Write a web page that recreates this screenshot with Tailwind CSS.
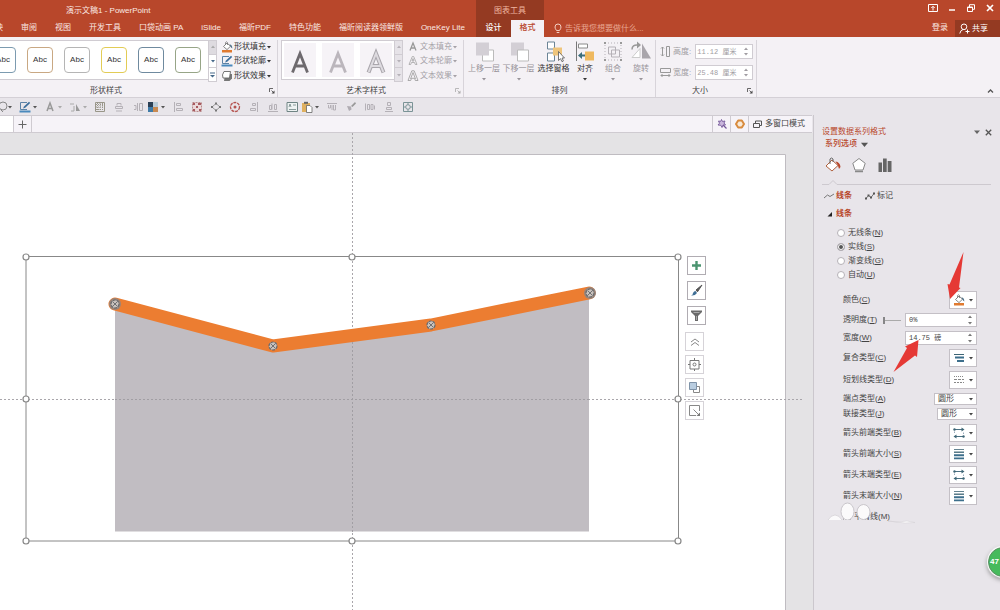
<!DOCTYPE html>
<html lang="zh-CN">
<head>
  <meta charset="UTF-8" />
  <meta name="viewport" content="width=device-width, initial-scale=1.0"/>
  <title>演示文稿1 - PowerPoint</title>
  <script src="https://cdn.jsdelivr.net/npm/@tailwindcss/browser@4"></script>
</head>
<body class="h-screen flex flex-col overflow-hidden bg-[#e8e5ea] text-[#444] text-[8px] leading-[12px] font-['Liberation_Sans','Noto_Sans_CJK_SC',sans-serif]">
  <!-- Shared icons -->
  <svg class="hidden">
    <symbol id="caret" viewBox="0 0 4 4"><path d="M0 1h4L2 3.4z" fill="currentColor"/></symbol>
    <symbol id="caret-up" viewBox="0 0 4 4"><path d="M0 3h4L2 .6z" fill="currentColor"/></symbol>
    <symbol id="launcher" viewBox="0 0 6 6"><path d="M.5 4V.5H4M2.5 2.5l2 2" fill="none" stroke="currentColor" stroke-width=".8"/><path d="M5.5 2.5v3h-3z" fill="currentColor"/></symbol>
    <symbol id="bucket" viewBox="0 0 12 12"><path d="M2.5 5.5 6 2l3.5 3.2L6 8.6z" fill="#fff" stroke="#777" stroke-width=".9"/><path d="M4.5 4V1.500Q5.500 0 6.500 1.500V4" fill="none" stroke="#777" stroke-width=".8"/><path d="M8.500 3.200q2.800.5 2.800 4.300-1.700-1-2.300-3z" fill="#4b6e86"/><path d="M1 9h10v2.500H1z" fill="#e07a30"/></symbol>
    <symbol id="outline" viewBox="0 0 12 12"><path d="M8 1.500H1.500v7H8" fill="none" stroke="#5c82a6"/><path d="m4 7.500 1-2L10 .8l1.200 1.200-5 4.800z" fill="#3c6e9c"/><path d="M.5 9.500h11v2H.5z" fill="#4a89bd"/></symbol>
    <symbol id="effect" viewBox="0 0 12 12"><path d="M4 4h7v4.500L8.500 11H3z" fill="#777"/><path d="M3 1.500h6.500L8.500 8H2q-1.500-3 1-6.500z" fill="#fff" stroke="#666" stroke-width=".9"/></symbol>
    <symbol id="lines" viewBox="0 0 12 12"><path d="M1 1.500h10" stroke="#3d6575" stroke-width=".8"/><path d="M1 4.200h10" stroke="#3d6575" stroke-width="1.300"/><path d="M1 7.200h10M1 10.400h10" stroke="#3d6f8c" stroke-width="1.900"/></symbol>
    <symbol id="arrows" viewBox="0 0 12 12"><path d="M1 2.500h9M2 9.500h9" stroke="#4b7183"/><path d="m8.500.5 3 2-3 2zM3.500 7.500l-3 2 3 2z" fill="#3d6575"/><circle cx="1.500" cy="2.500" r="1.200" fill="#3d6575"/><circle cx="10.500" cy="9.500" r="1.200" fill="#3d6575"/><path d="M1.500 4.500v1.500M10.500 5.500v1.500" stroke="#9ab"/></symbol>
  </svg>

  <!-- Title bar and tabs -->
  <header class="flex h-[37px] shrink-0 bg-[#b8472b] text-[#fbe9e3]">
    <div class="flex flex-col justify-between">
      <div class="pt-[5px] pl-[66px]">演示文稿1 - PowerPoint</div>
      <nav class="flex gap-[18px] h-[17px] pt-[2px] -ml-[5px] pr-[11px] whitespace-nowrap">
        <a href="#">映</a>
        <a href="#">审阅</a>
        <a href="#">视图</a>
        <a href="#">开发工具</a>
        <a href="#">口袋动画 PA</a>
        <a href="#">iSlide</a>
        <a href="#">福昕PDF</a>
        <a href="#">特色功能</a>
        <a href="#">福昕阅读器领鲜版</a>
        <a href="#">OneKey Lite</a>
      </nav>
    </div>
    <div class="flex flex-col justify-between w-[68px] bg-[#943a22]">
      <div class="pt-[5px] pl-[18px] text-[#eeb5a0]">图表工具</div>
      <div class="flex h-[17px] text-center leading-[16px]">
        <a href="#" class="flex-1 font-medium text-white">设计</a>
        <a href="#" class="w-[33px] bg-[#f4f1f5] font-medium text-[#b8472b]">格式</a>
      </div>
    </div>
    <div class="self-end flex items-center h-[17px] pl-[10px] gap-[3px] text-[#e9a893]">
      <svg class="w-2 h-[11px]" viewBox="0 0 8 11" fill="none" stroke="#f3cfc2"><path d="M2.500 7.500Q1 5.500 1 4a3 3 0 0 1 6 0q0 1.500-1.500 3.500zM2.700 9.500h2.600"/></svg>
      <span>告诉我您想要做什么...</span>
    </div>
    <div class="ml-auto flex flex-col justify-between">
      <div class="flex justify-end items-center gap-[9px] pt-[3px] pr-[5px]">
        <button aria-label="功能区显示选项"><svg class="w-[10px] h-[10px]" viewBox="0 0 10 10" fill="none" stroke="#fff"><path d="M.5 1.500h9v7h-9z"/><path d="M5 7.500v-4M3.300 5 5 3.300 6.700 5"/></svg></button>
        <button aria-label="最小化"><svg class="w-[10px] h-[10px]" viewBox="0 0 10 10"><path d="M2 7h6" stroke="#fff" stroke-width="1.500"/></svg></button>
        <button aria-label="还原"><svg class="w-[10px] h-[10px]" viewBox="0 0 10 10" fill="none" stroke="#fff"><path d="M1.500 4h5v4.500h-5zM3.500 4V1.700h5v4.600h-2M1.500 4.500h5"/></svg></button>
        <button aria-label="关闭"><svg class="w-[10px] h-[10px]" viewBox="0 0 10 10"><path d="m2 2 6 6M8 2 2 8" stroke="#fff" stroke-width="1.700"/></svg></button>
      </div>
      <div class="flex justify-end h-[17px]">
        <a href="#" class="pt-[2px] pr-[7px]">登录</a>
        <button class="flex items-center gap-[2px] w-[45px] pl-[4px] bg-[#943a22] text-white">
          <svg class="w-[11px] h-[11px]" viewBox="0 0 11 11" fill="none" stroke="#fff"><circle cx="5" cy="3.800" r="2.800"/><path d="M.8 10.500Q1.500 7 4 6.500M8.500 6.500v4M6.500 8.500h4"/></svg>
          共享
        </button>
      </div>
    </div>
  </header>

  <!-- Ribbon -->
  <div class="flex h-[61px] shrink-0 bg-[#f4f1f5] border-b border-[#d4d0d6] pt-[3px]">
    <!-- Shape styles -->
    <section class="flex flex-col justify-between border-r border-[#d8d4da]">
      <div class="flex">
        <div class="flex items-center gap-[11px] h-10 pr-[7px] bg-white border-y border-[#d0ccd2] text-[#333]">
          <button class="w-[26px] h-[26px] -ml-[10px] rounded-[4px] border border-[#7c9bb0] bg-white">Abc</button>
          <button class="w-[26px] h-[26px] rounded-[4px] border border-[#c9a883] bg-white">Abc</button>
          <button class="w-[26px] h-[26px] rounded-[4px] border border-[#b5b5b5] bg-white">Abc</button>
          <button class="w-[26px] h-[26px] rounded-[4px] border border-[#e2cc55] bg-white">Abc</button>
          <button class="w-[26px] h-[26px] rounded-[4px] border border-[#6f8a9f] bg-white">Abc</button>
          <button class="w-[26px] h-[26px] rounded-[4px] border border-[#97a587] bg-white">Abc</button>
        </div>
        <div class="flex flex-col w-[9px] border border-[#d0ccd2] bg-white text-[#46698a]">
          <button aria-label="上一行" class="flex-1 grid place-items-center bg-[#dedbe0] text-[#aaa]"><svg class="w-1 h-1"><use href="#caret-up"/></svg></button>
          <button aria-label="下一行" class="flex-1 grid place-items-center border-y border-[#d0ccd2]"><svg class="w-1 h-1"><use href="#caret"/></svg></button>
          <button aria-label="其他" class="flex-1 grid place-items-center"><svg class="w-[5px] h-[6px]" viewBox="0 0 5 6"><path d="M0 1h5" stroke="currentColor"/><path d="M0 3h5L2.500 5.500z" fill="currentColor"/></svg></button>
        </div>
        <div class="flex flex-col justify-between h-[42px] pl-[4px] pr-[6px] text-[#333]">
          <button class="flex items-center gap-[1px] h-[13px]"><svg class="w-3 h-3"><use href="#bucket"/></svg>形状填充<svg class="w-1 h-1"><use href="#caret"/></svg></button>
          <button class="flex items-center gap-[1px] h-[13px]"><svg class="w-3 h-3"><use href="#outline"/></svg>形状轮廓<svg class="w-1 h-1"><use href="#caret"/></svg></button>
          <button class="flex items-center gap-[1px] h-[13px]"><svg class="w-3 h-3"><use href="#effect"/></svg>形状效果<svg class="w-1 h-1"><use href="#caret"/></svg></button>
        </div>
      </div>
      <div class="flex items-center pr-[2px]"><span class="w-[212px] text-center">形状样式</span><button aria-label="形状样式设置" class="ml-auto"><svg class="w-[6px] h-[6px]"><use href="#launcher"/></svg></button></div>
    </section>

    <!-- WordArt styles -->
    <section class="flex flex-col justify-between border-r border-[#d8d4da]">
      <div class="flex pl-[3px]">
        <div class="flex items-center gap-[6px] h-10 px-[2px] bg-white border-y border-l border-[#d0ccd2]">
          <button aria-label="艺术字 1" class="w-[32px] h-[34px] bg-[#f6f3f7]"><svg class="w-full h-full" viewBox="0 0 32 34"><path d="M8.500 29.500 16 10.500l7.500 19M11 23h10" fill="none" stroke="#6e6a6e" stroke-width="2.800"/></svg></button>
          <button aria-label="艺术字 2" class="w-[32px] h-[34px] bg-[#f6f3f7]"><svg class="w-full h-full" viewBox="0 0 32 34"><path d="M8.500 29.500 16 10.500l7.500 19M11 23h10" fill="none" stroke="#bbb6bc" stroke-width="2.800"/></svg></button>
          <button aria-label="艺术字 3" class="w-[32px] h-[34px] bg-[#f6f3f7]"><svg class="w-full h-full" viewBox="0 0 32 34" fill="none"><path d="M8.500 29.500 16 10.500l7.500 19M11 23h10" stroke="#aaa6ac" stroke-width="4"/><path d="M8.700 29 16 10.500l7.300 18.500M11 23h10" stroke="#dedbe0" stroke-width="2"/></svg></button>
        </div>
        <div class="flex flex-col w-[9px] border border-[#d0ccd2] bg-[#e6e3e8] text-[#b5b1b7]">
          <button aria-label="上一行" class="flex-1 grid place-items-center"><svg class="w-1 h-1"><use href="#caret-up"/></svg></button>
          <button aria-label="下一行" class="flex-1 grid place-items-center border-y border-[#d0ccd2]"><svg class="w-1 h-1"><use href="#caret"/></svg></button>
          <button aria-label="其他" class="flex-1 grid place-items-center"><svg class="w-1 h-1"><use href="#caret"/></svg></button>
        </div>
        <div class="flex flex-col justify-between h-[42px] pl-[4px] pr-[6px] text-[#a5a1a7]">
          <button class="flex items-center gap-[1px] h-[13px]"><svg class="w-3 h-3" viewBox="0 0 12 12" fill="none" stroke="#999" stroke-width="1.300"><path d="M3 9.500 6 2l3 7.500M4 7h4"/></svg>文本填充<svg class="w-1 h-1"><use href="#caret"/></svg></button>
          <button class="flex items-center gap-[1px] h-[13px]"><svg class="w-3 h-3" viewBox="0 0 12 12" fill="none" stroke="#a5a5a5" stroke-width=".8"><path d="M2 9.500 5.300 1.500h1.400l3.300 8H8.300l-.8-2h-3l-.8 2zM5 6l1-2.500L7 6z"/></svg>文本轮廓<svg class="w-1 h-1"><use href="#caret"/></svg></button>
          <button class="flex items-center gap-[1px] h-[13px]"><svg class="w-3 h-3" viewBox="0 0 12 12" fill="none" stroke="#999" stroke-width=".8"><path d="M1 10.500 4.800.8h2.400l3.800 9.700H8.300l-.7-2.200H4.500l-.8 2.200zM3.500 9 6 2.500 8.500 9"/></svg>文本效果<svg class="w-1 h-1"><use href="#caret"/></svg></button>
        </div>
      </div>
      <div class="flex items-center pr-[2px]"><span class="w-[176px] text-center">艺术字样式</span><button aria-label="艺术字样式设置" class="ml-auto text-[#aaa]"><svg class="w-[6px] h-[6px]"><use href="#launcher"/></svg></button></div>
    </section>

    <!-- Arrange -->
    <section class="flex flex-col justify-between border-r border-[#d8d4da] text-center">
      <div class="flex pl-[3px] text-[#98949a]">
        <button class="flex flex-col items-center w-[34px]">
          <svg class="w-[22px] h-[23px]" viewBox="0 0 22 22"><path d="M9.500 9.500h11v11h-11z" fill="#fff" stroke="#bbb"/><path d="M3 2h13v13H3z" fill="#d3cfd5"/></svg>
          上移一层<svg class="w-1 h-1 mt-[2px]"><use href="#caret"/></svg>
        </button>
        <button class="flex flex-col items-center w-[35px]">
          <svg class="w-[22px] h-[23px]" viewBox="0 0 22 22"><path d="M3 2h13v13H3z" fill="#d3cfd5"/><path d="M9.500 9.500h11v11h-11z" fill="#fff" stroke="#bbb"/></svg>
          下移一层<svg class="w-1 h-1 mt-[2px]"><use href="#caret"/></svg>
        </button>
        <button class="flex flex-col items-center w-[35px] text-[#333]">
          <svg class="w-[22px] h-[23px]" viewBox="0 0 22 22"><path d="M4.500 1.500h7v7h-7zM4.500 12.500h7v8h-7z" fill="#fff" stroke="#6b8496"/><path d="M10 7h9v8h-9z" fill="#efc57c"/><path d="m15.500 11 0 9 2-1.800 1.500 3 1.400-.7-1.400-3h2.500z" fill="#fff" stroke="#555" stroke-width=".8"/></svg>
          选择窗格
        </button>
        <button class="flex flex-col items-center w-[28px] text-[#333]">
          <svg class="w-[22px] h-[23px]" viewBox="0 0 22 22"><path d="M2.500 1v19.500" stroke="#777"/><path d="M4.500 3.500h9v4h-9z" fill="#fff" stroke="#8a8a8a"/><path d="M11 11h9v9h-9z" fill="#efb95f"/><path d="m4 15 4-3.500V14h3v2H8v2.500z" fill="#3c6e7c"/></svg>
          对齐<svg class="w-1 h-1 mt-[2px]"><use href="#caret"/></svg>
        </button>
        <button class="flex flex-col items-center w-[28px]">
          <svg class="w-[22px] h-[23px]" viewBox="0 0 22 22" fill="none" stroke="#b5b1b7"><path d="M3 2.500h16v17H3z" stroke-dasharray="1 2"/><path d="M6.500 6.500h7v7h-7zM9.500 9.500h8v7h-8z"/><path d="M2 1.500h2v2H2zM18 1.500h2v2h-2zM2 18.500h2v2H2zM18 18.500h2v2h-2z" fill="#999" stroke="none"/></svg>
          组合<svg class="w-1 h-1 mt-[2px]"><use href="#caret"/></svg>
        </button>
        <button class="flex flex-col items-center w-[28px]">
          <svg class="w-[22px] h-[23px]" viewBox="0 0 22 22"><path d="M10 8v9H2z" fill="#fff" stroke="#ccc"/><path d="M12 3v15h9z" fill="#a9a5ab"/><path d="M2 9q0-5 6-4.500" fill="none" stroke="#999" stroke-width="1.500"/><path d="m7 1 4 3.500L7 8z" fill="#999"/></svg>
          旋转<svg class="w-1 h-1 mt-[2px]"><use href="#caret"/></svg>
        </button>
      </div>
      <div class="text-center">排列</div>
    </section>

    <!-- Size -->
    <section class="flex flex-col justify-between border-r border-[#d8d4da] pl-[4px] pr-[3px]">
      <div class="flex flex-col gap-[6px] pt-[4px] text-[#a09ca2]">
        <div class="flex items-center gap-[2px]">
          <svg class="w-[11px] h-[11px]" viewBox="0 0 11 11" fill="none" stroke="#999"><path d="M6.500.5h3v10h-3zM2.500 1v9M1 2.500 2.500 1 4 2.500M1 8.500 2.500 10 4 8.500"/></svg>
          <label for="h">高度:</label>
          <div class="flex h-[15px] ml-[2px] border border-[#d0ccd2] bg-white"><input id="h" value="11.12 厘米" class="w-[48px] pl-[1px] text-[7px] font-['Liberation_Mono','Noto_Sans_CJK_SC',monospace]"><span class="flex flex-col justify-evenly w-[8px]"><svg class="w-1 h-1"><use href="#caret-up"/></svg><svg class="w-1 h-1"><use href="#caret"/></svg></span></div>
        </div>
        <div class="flex items-center gap-[2px]">
          <svg class="w-[11px] h-[11px]" viewBox="0 0 11 11" fill="none" stroke="#999"><path d="M.5 1.500h10v4H.5zM1 8.500h9M2.500 7 1 8.500 2.500 10M8.500 7 10 8.500 8.500 10"/></svg>
          <label for="w">宽度:</label>
          <div class="flex h-[15px] ml-[2px] border border-[#d0ccd2] bg-white"><input id="w" value="25.48 厘米" class="w-[48px] pl-[1px] text-[7px] font-['Liberation_Mono','Noto_Sans_CJK_SC',monospace]"><span class="flex flex-col justify-evenly w-[8px]"><svg class="w-1 h-1"><use href="#caret-up"/></svg><svg class="w-1 h-1"><use href="#caret"/></svg></span></div>
        </div>
      </div>
      <div class="flex items-center"><span class="w-[80px] text-center">大小</span><button aria-label="大小设置" class="ml-auto"><svg class="w-[6px] h-[6px]"><use href="#launcher"/></svg></button></div>
    </section>
    <button aria-label="折叠功能区" class="ml-auto self-end p-[3px] pr-[6px]"><svg class="w-[7px] h-[6px]" viewBox="0 0 7 6"><path d="M1 4.500 3.500 2 6 4.500" fill="none" stroke="#555" stroke-width="1.300"/></svg></button>
  </div>

  <!-- Quick access toolbar -->
  <div class="flex items-center gap-[7px] h-[17px] shrink-0 text-[#555]">
    <button aria-label="形状" class="flex items-center -ml-1"><svg class="w-3 h-3" viewBox="0 0 12 12" fill="none" stroke="#888"><circle cx="7" cy="5" r="4"/><path d="m5 9 2 2"/></svg><svg class="w-1 h-1"><use href="#caret"/></svg></button>
    <button aria-label="轮廓" class="flex items-center gap-[2px]"><svg class="w-3 h-3"><use href="#outline"/></svg><svg class="w-1 h-1"><use href="#caret"/></svg></button>
    <button aria-label="字体颜色" class="flex items-center gap-[2px] text-[#aaa]"><svg class="w-3 h-3" viewBox="0 0 12 12" fill="none" stroke="#999" stroke-width="1.500"><path d="M3 10 6 2l3 8M4 7.500h4"/></svg><svg class="w-1 h-1"><use href="#caret"/></svg></button>
    <button aria-label="旋转" class="flex items-center gap-[2px] text-[#aaa]"><svg class="w-3 h-3" viewBox="0 0 12 12"><path d="M7 3v7h4z" fill="#999"/><path d="M5 5v5H2M1 3h4" fill="none" stroke="#aaa"/></svg><svg class="w-1 h-1"><use href="#caret"/></svg></button>
    <button aria-label="图案"><svg class="w-3 h-3" viewBox="0 0 12 12" fill="none" stroke="#999689"><path d="M1.500 1.500h9v9h-9z"/><path d="M2 3.500h8M2 6h8M2 8.500h8M3.500 2v8M6 2v8M8.500 2v8" stroke-dasharray="1 1"/></svg></button>
    <button aria-label="置于顶层"><svg class="w-3 h-3" viewBox="0 0 12 12" fill="none" stroke="#b5b1b7"><path d="M4 4.500V2.500h4v2M2.500 5.500h7v2h-7zM3 10h6"/></svg></button>
    <button aria-label="分布"><svg class="w-3 h-3" viewBox="0 0 12 12" fill="none" stroke="#b5b1b7"><path d="M7.500 2.500h3v7h-3zM2 4.500h2v4H2M5.500 2v8"/></svg></button>
    <button aria-label="主题色" class="flex items-center gap-[2px] -ml-1"><svg class="w-3 h-3" viewBox="0 0 12 12"><path d="M1 1h5v5H1z" fill="#2b4056"/><path d="M6 1h5v5H6z" fill="#b9cbd8"/><path d="M1 6h5v5H1z" fill="#3f7ba8"/><path d="M6 6h5v5H6z" fill="#c98a52"/></svg><svg class="w-1 h-1"><use href="#caret"/></svg></button>
    <button aria-label="左对齐"><svg class="w-3 h-3" viewBox="0 0 12 12" fill="none" stroke="#b5b1b7"><path d="M2.500 1v10M4.500 2.500h4v2h-4zM4.500 7.500h6v2h-6z"/></svg></button>
    <button aria-label="组合"><svg class="w-3 h-3" viewBox="0 0 12 12"><path d="M1.500 1.500h9v9h-9z" fill="#ead9da" stroke="#b98a8c" stroke-dasharray="2 1"/><path d="M2 2h2v2H2zM7 2h3v2H7zM5 5h2v2H5zM2 8h2v2H2zM8 8h2v2H8z" fill="#a85a60"/></svg></button>
    <button aria-label="顶点"><svg class="w-3 h-3" viewBox="0 0 12 12"><path d="m6 2.500 4 3.500-4 3.500L2 6z" fill="none" stroke="#999"/><path d="M5 1.500h2v2H5zM5 8.500h2v2H5zM1 5h2v2H1zM9 5h2v2H9z" fill="#777"/></svg></button>
    <button aria-label="定位"><svg class="w-3 h-3" viewBox="0 0 12 12"><circle cx="6" cy="6" r="4.500" fill="none" stroke="#b5524f" stroke-width="1.300" stroke-dasharray="3 .8"/><circle cx="6" cy="6" r="1.500" fill="#b5524f"/></svg></button>
    <button aria-label="右对齐"><svg class="w-3 h-3" viewBox="0 0 12 12" fill="none" stroke="#b5b1b7"><path d="M9.500 1v10M4.500 2.500h3v2h-3zM2.500 7.500h5v2h-5z"/></svg></button>
    <button aria-label="底端对齐"><svg class="w-3 h-3" viewBox="0 0 12 12" fill="none" stroke="#b5b1b7"><path d="M1 10.500h10M2.500 4.500h2v4h-2zM7.500 3.500h2v5h-2zM5 8.500v-6"/></svg></button>
    <button aria-label="文本框"><svg class="w-3 h-3" viewBox="0 0 12 12" fill="none" stroke="#6f8484"><path d="M1 1.500h10.500v9H1z" fill="#eef2f2"/><path d="m3 6 1-3 1 3M7 4h3M3 8.500h7" stroke-width=".8"/></svg></button>
    <button aria-label="粘贴" class="flex items-center gap-[2px] -ml-1"><svg class="w-3 h-3" viewBox="0 0 12 12"><path d="M1 2h8v9H1z" fill="#dfb05f"/><path d="M3 .8h4v2H3z" fill="#666"/><path d="M5.500 4.500h3.500l2 2v5H5.500z" fill="#fff" stroke="#666" stroke-width=".8"/></svg><svg class="w-1 h-1"><use href="#caret"/></svg></button>
    <button aria-label="顶端对齐"><svg class="w-3 h-3" viewBox="0 0 12 12" fill="none" stroke="#b5b1b7"><path d="M1 2.500h10M2.500 4v3h2V4M7.500 4v5h2V4M6 4v5"/></svg></button>
    <button aria-label="格式刷"><svg class="w-3 h-3" viewBox="0 0 12 12"><path d="m6 5 4-4 1 1.500L7.500 6z" fill="#999"/><path d="m2 5 4 .5.500 3L4 10z" fill="#b0acb2"/></svg></button>
    <button aria-label="横向分布"><svg class="w-3 h-3" viewBox="0 0 12 12" fill="none" stroke="#b5b1b7"><path d="M1.500 2.500v7M10.500 4.500v4M3.500 3.500h2v5h-2zM7 3.500h2v5H7z"/></svg></button>
    <button aria-label="纵向分布"><svg class="w-3 h-3" viewBox="0 0 12 12" fill="none" stroke="#b5b1b7"><path d="M2 10.500h8M4.500 1.500h3v3h-3zM3.500 6.500h5v2h-5z"/></svg></button>
    <button aria-label="全屏"><svg class="w-3 h-3" viewBox="0 0 12 12" fill="none" stroke="#7a9396"><path d="M1.500 1.500h9v9h-9z"/><circle cx="6" cy="6" r="2.300"/><path d="M6 1v2.500M6 8.500V11M1 6h2.500M8.500 6H11"/></svg></button>
  </div>

  <div class="flex flex-1 min-h-0">
    <main class="flex flex-col flex-1 min-w-0">
      <!-- Document tabs -->
      <div class="flex h-[18px] shrink-0 mr-[1px] border-y border-[#cfcbd1] bg-[#f6f3f8]">
        <div class="w-[13px] bg-white"></div>
        <button aria-label="新建" class="grid place-items-center w-[19px] border-x border-[#cfcbd1]"><svg class="w-[9px] h-[9px]" viewBox="0 0 9 9"><path d="M4.500.5v8M.5 4.500h8" stroke="#666"/></svg></button>
        <div class="ml-auto flex">
          <button aria-label="魔棒" class="grid place-items-center w-[18px] border-l border-[#cfcbd1]"><svg class="w-[10px] h-[10px]" viewBox="0 0 10 10"><path d="m4.500.5 1 2 2.500-.5-1 2 1.500 2-2.500.2-1 2.300-1.200-2.200L1 6l1.500-1.800L1.500 2l2.200.4z" fill="#c9b6dc" stroke="#75589a" stroke-width=".9"/><path d="m6 6 3.500 3.500" stroke="#75589a" stroke-width="1.200"/></svg></button>
          <button aria-label="设置" class="grid place-items-center w-[18px] border-l border-[#cfcbd1]"><svg class="w-[10px] h-[10px]" viewBox="0 0 10 10"><path d="M3.200 1.500h3.600L9 5 6.800 8.500H3.200L1 5z" fill="#f9ead8" stroke="#d88b3e" stroke-width="2" stroke-linejoin="round"/></svg></button>
          <button class="flex items-center gap-[3px] pl-[4px] pr-[7px] border-l border-[#cfcbd1]"><svg class="w-[9px] h-[9px]" viewBox="0 0 9 9" fill="none" stroke="#555"><path d="M.5 3.500h6v4h-6zM2.500 3V1h6v4.500h-2"/></svg>多窗口模式</button>
        </div>
      </div>

      <!-- Slide canvas -->
      <div class="relative flex-1 min-h-0 overflow-hidden bg-[#e4e3e5]">
        <svg class="absolute top-0 left-0 h-[477px] w-[812px]" viewBox="0 133 812 477">
          <path d="M-1 154.500h786.500V611H-1z" fill="#fff" stroke="#bfbcc1"/>
          <path d="M352.500 133v477M0 399.500h802" stroke="#a9a6ab" stroke-dasharray="2 2" fill="none"/>
          <path d="M115 304 273 346 431 325 589 293V531.500H115z" fill="#c1bdc2"/>
          <path d="M115 304 273 346 431 325 589 293" fill="none" stroke="#ec7d31" stroke-width="13" stroke-linecap="round" stroke-linejoin="round"/>
          <path d="M352.500 342v190M115 399.500h474" stroke="#a19ea3" stroke-dasharray="2 2" fill="none"/>
          <g fill="none" stroke="#888">
            <path d="M26 256.500h652.500V541H26z"/>
            <g fill="#fff" stroke-width="1.200">
              <circle cx="26" cy="257" r="3"/><circle cx="352" cy="257" r="3"/><circle cx="678" cy="257" r="3"/>
              <circle cx="26" cy="399" r="3"/><circle cx="678" cy="399" r="3"/>
              <circle cx="26" cy="541" r="3"/><circle cx="352" cy="541" r="3"/><circle cx="678" cy="541" r="3"/>
            </g>
          </g>
          <!-- selected data points -->
          <circle cx="115" cy="304" r="6" fill="#9a8478"/>
          <circle cx="590" cy="293" r="6" fill="#9a8478"/>
          <g fill="#c9c2bd" stroke="#66686b" stroke-width="1.200">
            <g id="point"><circle cx="115" cy="304" r="4" stroke-dasharray="3 1"/><path d="m112.500 301.500 5 5M117.500 301.500l-5 5" stroke-width=".9"/></g>
            <use href="#point" x="158" y="42"/><use href="#point" x="316" y="21"/><use href="#point" x="475" y="-11"/>
          </g>
        </svg>
        <!-- Chart buttons -->
        <div class="absolute left-[687px] top-[123px] flex flex-col gap-[6px]">
          <button aria-label="图表元素" class="grid place-items-center w-[19px] h-[19px] border border-[#b0acb2] bg-white"><svg class="w-[11px] h-[11px]" viewBox="0 0 11 11"><path d="M5.500 1v9M1 5.500h9" stroke="#4b9470" stroke-width="2.400"/></svg></button>
          <button aria-label="图表样式" class="grid place-items-center w-[19px] h-[19px] border border-[#b0acb2] bg-white"><svg class="w-[13px] h-[13px]" viewBox="0 0 13 13"><path d="m12 1-6 5 1.500 1.800z" fill="#555" stroke="#555"/><path d="M5.500 7 7 9q-2 3-6 2.500 2-.5 2-2.500 1-2 2.500-2z" fill="#3f6f96"/></svg></button>
          <button aria-label="图表筛选器" class="grid place-items-center w-[19px] h-[19px] border border-[#b0acb2] bg-white"><svg class="w-[13px] h-[13px]" viewBox="0 0 13 13"><path d="M1 1.500h11v1.500L8 7v5H5V7L1 3z" fill="#6a6a6a"/><path d="M3.500 3.500h6M6.500 7v4" stroke="#bbb" stroke-width=".8"/></svg></button>
        </div>
        <div class="absolute left-[685px] top-[199px] flex flex-col gap-[4px]">
          <button aria-label="收起" class="grid place-items-center w-[19px] h-[19px] border border-[#d6d3d8] bg-white"><svg class="w-[10px] h-[10px]" viewBox="0 0 10 10" fill="none" stroke="#888"><path d="m1 5 4-3 4 3M1 8.500l4-3 4 3"/></svg></button>
          <button aria-label="居中" class="grid place-items-center w-[19px] h-[19px] border border-[#d6d3d8] bg-white"><svg class="w-[13px] h-[13px]" viewBox="0 0 13 13" fill="none" stroke="#777"><path d="M2 2.500h9v8.500H2z"/><circle cx="6.500" cy="6.500" r="1.500"/><path d="M6.500 0v2M6.500 11v2M0 6.500h2M11 6.500h2"/></svg></button>
          <button aria-label="层叠" class="grid place-items-center w-[19px] h-[19px] border border-[#d6d3d8] bg-white"><svg class="w-[13px] h-[13px]" viewBox="0 0 13 13"><path d="M5.500 5.500h6v6h-6z" fill="#fff" stroke="#888"/><path d="M1.500 1.500h7v7h-7z" fill="#b9cde0" stroke="#7f93a8"/></svg></button>
          <button aria-label="调整大小" class="grid place-items-center w-[19px] h-[19px] border border-[#d6d3d8] bg-white"><svg class="w-[13px] h-[13px]" viewBox="0 0 13 13" fill="none" stroke="#888"><path d="M11.500 7V1.500h-10v10H8M5.500 5.500l5.500 5.500" /><path d="M12 8.500V12H8.500z" fill="#777" stroke="none"/></svg></button>
        </div>
      </div>
    </main>

    <!-- Format pane -->
    <aside class="relative w-[187px] shrink-0 border-l border-[#cbc7cd] pt-[11px] pl-[8px]">
      <div class="flex items-center">
        <h2 class="text-[#b8472b]">设置数据系列格式</h2>
        <button aria-label="窗格选项" class="ml-auto"><svg class="w-[6px] h-[6px] text-[#666]"><use href="#caret"/></svg></button>
        <button aria-label="关闭窗格" class="ml-[5px] mr-[8px]"><svg class="w-[7px] h-[7px]" viewBox="0 0 7 7"><path d="m.8.8 5.400 5.400M6.200.8.800 6.200" stroke="#555" stroke-width="1.300"/></svg></button>
      </div>
      <button class="flex items-center gap-[4px] pl-[3px] font-medium text-[#b8472b]">系列选项<svg class="w-[7px] h-[7px] text-[#555]"><use href="#caret"/></svg></button>
      <div class="flex gap-[10px] pt-[7px] pl-[3px]">
        <button aria-label="填充与线条"><svg class="w-4 h-4" viewBox="0 0 16 16"><path d="M1 9 7 3l6 5.500L7 14z" fill="#fff" stroke="#b0623f"/><path d="M5 7V2q1.500-2 3 0v3" fill="none" stroke="#666"/><path d="M10.500 4.500q4.500.5 5 5.500l-1.500 2q-.5-4-3.500-7.500z" fill="#b8472b"/></svg></button>
        <button aria-label="效果"><svg class="w-4 h-4" viewBox="0 0 16 16"><path d="m8 1.500 6.200 4.800L12 13H4L1.800 6.300z" fill="#fff" stroke="#888"/><path d="M4 14.500h8" stroke="#888" stroke-width="1.500"/></svg></button>
        <button aria-label="系列选项"><svg class="w-4 h-4" viewBox="0 0 16 16"><path d="M1.500 5.500H5V15H1.500zM6 1.500h3.700V15H6zM10.700 4h3.800v11h-3.800z" fill="#666"/></svg></button>
      </div>
      <svg class="h-[8px] w-[169px] mt-[5px]" viewBox="0 0 169 8"><path d="M0 6.500h7l4-4 4 4h154" fill="none" stroke="#cdc9cf"/></svg>
      <div class="flex items-center gap-[13px] mt-[4px] pl-[2px]">
        <a href="#" class="flex items-center gap-[2px] font-bold text-[#b8472b]"><svg class="w-[10px] h-[6px]" viewBox="0 0 10 6"><path d="m0 5 3.500-3L6 3.500 10 1" fill="none" stroke="#777"/></svg>线条</a>
        <a href="#" class="flex items-center gap-[2px]"><svg class="w-[10px] h-[8px]" viewBox="0 0 10 8"><path d="m1 6.500 2.500-3 2.500 2L9 1.500" fill="none" stroke="#777"/><path d="M0 5.500h2v2H0zM2.500 2.500h2v2h-2zM5 4.500h2v2H5zM8 .5h2v2H8z" fill="#555"/></svg>标记</a>
      </div>
      <button class="flex items-center gap-[4px] mt-[6px] pl-[5px] font-bold text-[#b8472b]"><svg class="w-[5px] h-[5px]" viewBox="0 0 5 5"><path d="M5 0v4.500H.5z" fill="#222"/></svg>线条</button>
      <div class="flex flex-col gap-[2px] mt-[7px] pl-[15px]">
        <label class="flex items-center gap-[3px]"><input type="radio" name="line" class="appearance-none w-2 h-2 rounded-full border border-[#b5b1b7] bg-white"><span>无线条(<u>N</u>)</span></label>
        <label class="flex items-center gap-[3px]"><input type="radio" name="line" checked class="appearance-none w-2 h-2 rounded-full border border-[#b5b1b7] bg-white checked:bg-[#555] checked:shadow-[inset_0_0_0_1px_white]"><span>实线(<u>S</u>)</span></label>
        <label class="flex items-center gap-[3px]"><input type="radio" name="line" class="appearance-none w-2 h-2 rounded-full border border-[#b5b1b7] bg-white"><span>渐变线(<u>G</u>)</span></label>
        <label class="flex items-center gap-[3px]"><input type="radio" name="line" class="appearance-none w-2 h-2 rounded-full border border-[#b5b1b7] bg-white"><span>自动(<u>U</u>)</span></label>
      </div>

      <div class="flex flex-col gap-[4px] mt-[10px] pl-[21px] pr-[23px]">
        <div class="flex items-center justify-between h-[18px]">
          <span>颜色(<u>C</u>)</span>
          <button aria-label="颜色" class="flex items-center justify-center gap-[4px] w-[28px] h-full border border-[#c4c0c6] bg-white"><svg class="w-3 h-3"><use href="#bucket"/></svg><svg class="w-1 h-1"><use href="#caret"/></svg></button>
        </div>
        <div class="flex items-center h-[14px]">
          <label for="alpha">透明度(<u>T</u>)</label>
          <svg class="w-[18px] h-[7px] ml-auto mr-[4px]" viewBox="0 0 18 7"><path d="M2 3.500h16" stroke="#aaa"/><path d="M1 0v7" stroke="#666" stroke-width="1.500"/></svg>
          <div class="flex h-full border border-[#c4c0c6] bg-white"><input id="alpha" value="0%" class="w-[62px] pl-[3px] text-[7px] font-['Liberation_Mono','Noto_Sans_CJK_SC',monospace]"><span class="flex flex-col justify-evenly w-[8px] text-[#777]"><svg class="w-1 h-1"><use href="#caret-up"/></svg><svg class="w-1 h-1"><use href="#caret"/></svg></span></div>
        </div>
        <div class="flex items-center justify-between h-[14px]">
          <label for="width">宽度(<u>W</u>)</label>
          <div class="flex h-full border border-[#c4c0c6] bg-white"><input id="width" value="14.75 磅" class="w-[62px] pl-[3px] text-[7px] font-['Liberation_Mono','Noto_Sans_CJK_SC',monospace]"><span class="flex flex-col justify-evenly w-[8px] text-[#777]"><svg class="w-1 h-1"><use href="#caret-up"/></svg><svg class="w-1 h-1"><use href="#caret"/></svg></span></div>
        </div>
        <div class="flex items-center justify-between h-[18px]">
          <span>复合类型(<u>C</u>)</span>
          <button aria-label="复合类型" class="flex items-center justify-center gap-[4px] w-[28px] h-full border border-[#c4c0c6] bg-white"><svg class="w-3 h-3" viewBox="0 0 12 12"><path d="M1 2.500h10" stroke="#3d6575"/><path d="M2 5.500h9M4 9h7" stroke="#3d6f8c" stroke-width="1.800"/></svg><svg class="w-1 h-1"><use href="#caret"/></svg></button>
        </div>
        <div class="flex items-center justify-between h-[18px]">
          <span>短划线类型(<u>D</u>)</span>
          <button aria-label="短划线类型" class="flex items-center justify-center gap-[4px] w-[28px] h-full border border-[#c4c0c6] bg-white"><svg class="w-3 h-3" viewBox="0 0 12 12" fill="none" stroke="#888"><path d="M1 2.500h10" stroke-dasharray="1 1"/><path d="M1 5.500h10" stroke-dasharray="3 1"/><path d="M1 8.500h10" stroke-dasharray="2 1"/></svg><svg class="w-1 h-1"><use href="#caret"/></svg></button>
        </div>
        <div class="flex flex-col gap-[3px]">
          <div class="flex items-center justify-between h-[12px]">
            <label for="cap">端点类型(<u>A</u>)</label>
            <div class="grid items-center w-[43px] border border-[#c4c0c6] bg-white">
              <select id="cap" class="appearance-none col-start-1 row-start-1 h-[10px] pl-[3px] leading-[10px]"><option>圆形</option></select>
              <svg class="col-start-1 row-start-1 justify-self-end w-1 h-1 mr-[3px] pointer-events-none"><use href="#caret"/></svg>
            </div>
          </div>
          <div class="flex items-center justify-between h-[12px]">
            <label for="join">联接类型(<u>J</u>)</label>
            <div class="grid items-center w-[40px] border border-[#c4c0c6] bg-white">
              <select id="join" class="appearance-none col-start-1 row-start-1 h-[10px] pl-[3px] leading-[10px]"><option>圆形</option></select>
              <svg class="col-start-1 row-start-1 justify-self-end w-1 h-1 mr-[3px] pointer-events-none"><use href="#caret"/></svg>
            </div>
          </div>
        </div>
        <div class="flex flex-col gap-[3px]">
          <div class="flex items-center justify-between h-[18px]">
            <span>箭头前端类型(<u>B</u>)</span>
            <button aria-label="箭头前端类型" class="flex items-center justify-center gap-[4px] w-[28px] h-full border border-[#c4c0c6] bg-white"><svg class="w-3 h-3"><use href="#arrows"/></svg><svg class="w-1 h-1"><use href="#caret"/></svg></button>
          </div>
          <div class="flex items-center justify-between h-[18px]">
            <span>箭头前端大小(<u>S</u>)</span>
            <button aria-label="箭头前端大小" class="flex items-center justify-center gap-[4px] w-[28px] h-full border border-[#c4c0c6] bg-white"><svg class="w-3 h-3"><use href="#lines"/></svg><svg class="w-1 h-1"><use href="#caret"/></svg></button>
          </div>
          <div class="flex items-center justify-between h-[18px]">
            <span>箭头末端类型(<u>E</u>)</span>
            <button aria-label="箭头末端类型" class="flex items-center justify-center gap-[4px] w-[28px] h-full border border-[#c4c0c6] bg-white"><svg class="w-3 h-3"><use href="#arrows"/></svg><svg class="w-1 h-1"><use href="#caret"/></svg></button>
          </div>
          <div class="flex items-center justify-between h-[18px]">
            <span>箭头末端大小(<u>N</u>)</span>
            <button aria-label="箭头末端大小" class="flex items-center justify-center gap-[4px] w-[28px] h-full border border-[#c4c0c6] bg-white"><svg class="w-3 h-3"><use href="#lines"/></svg><svg class="w-1 h-1"><use href="#caret"/></svg></button>
          </div>
        </div>
        <label class="flex items-center gap-[3px] mt-[2px]"><input type="checkbox" class="appearance-none w-2 h-2 border border-[#b5b1b7] bg-white"><span>平滑线(M)</span></label>
      </div>

      <!-- Annotations over the pane -->
      <svg class="absolute left-0 top-0 w-[186px] h-[495px] pointer-events-none" viewBox="814 115 186 495">
        <path d="M963.500 252 959 287.500l1.500.5-10.500 11-2.500-15 2 .5z" fill="#e53935"/>
        <path d="m893.500 372 13.500-24-2-1.500 13.500-6.500-1.500 17-2-1.500z" fill="#e53935"/>
        <path d="M828 520q3-5 7-5t7 5z" fill="#fbfafb"/>
        <path d="M828 520q3-5 7-5t7 5" fill="none" stroke="#c9c6cb" stroke-width=".6"/>
        <ellipse cx="847.500" cy="511.500" rx="6.500" ry="8.500" fill="#fbfafb" stroke="#c9c6cb"/>
        <ellipse cx="863.500" cy="512" rx="6.500" ry="7.500" fill="#fbfafb" stroke="#c9c6cb"/>
        <path d="M836 520h34v5h-34z" fill="#e8e5ea"/>
        <path d="m888 521 10 1 9-1 8 1.500-10 .5z" fill="#fff" stroke="#d5d2d7" stroke-width=".6"/>
      </svg>
      <div class="absolute -right-[18px] top-[432px] grid items-center w-[30px] h-[30px] pl-[1px] rounded-full border border-[#5a8f62] bg-[#46ba5c] shadow-[0_0_1px_1px_#fff,0_2px_4px_1px_#999] text-white font-bold">47</div>
    </aside>
  </div>
</body>
</html>
